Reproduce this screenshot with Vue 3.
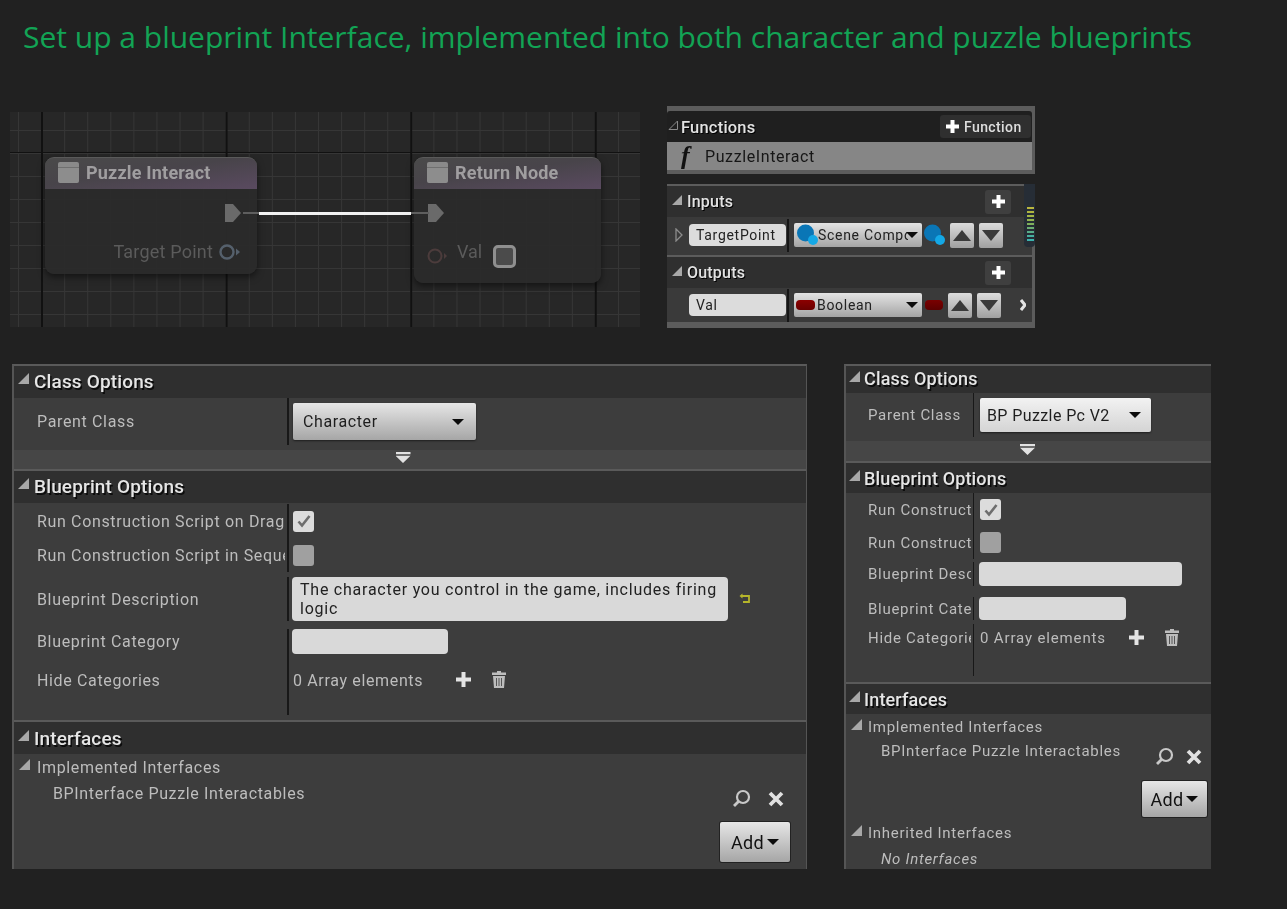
<script setup>
const meterTicks = ['#b9b63e', '#b0b63f', '#a3b646', '#93b44e', '#7fb05c', '#6cae70', '#58ad88', '#46b09f', '#3bb3ae'];
</script>

<template>
  <div class="page">
    <h1 class="title">Set up a blueprint Interface, implemented into both character and puzzle blueprints</h1>

    <div class="top-row">
      <div class="graph">
        <div class="node node-call">
          <div class="node-head"><span class="node-icon"></span>Puzzle Interact</div>
          <svg class="exec exec-out" width="20" height="20" viewBox="0 0 20 20"><path d="M1 1h8l8 9-8 9H1z" fill="#6a6a6a" /></svg>
          <span class="pin-label target-label">Target Point</span>
          <svg class="obj-pin target-pin" width="22" height="18" viewBox="0 0 22 18"><circle cx="8" cy="9" r="6.500" fill="none" stroke="#55606c" stroke-width="2.400" /><path d="M17 5.500l4 3.500-4 3.500z" fill="#55606c" /></svg>
        </div>
        <div class="node node-return">
          <div class="node-head"><span class="node-icon"></span>Return Node</div>
          <svg class="exec exec-in" width="20" height="20" viewBox="0 0 20 20"><path d="M1 1h8l8 9-8 9H1z" fill="#6a6a6a" /></svg>
          <svg class="obj-pin val-pin" width="22" height="18" viewBox="0 0 22 18"><circle cx="8" cy="9" r="6.500" fill="none" stroke="#4c3c3c" stroke-width="2" /><path d="M17 6l3 3-3 3z" fill="#4c3c3c" /></svg>
          <span class="pin-label val-label">Val</span>
          <span class="val-box"></span>
        </div>
        <span class="wire wire-dim wire-a"></span>
        <span class="wire wire-main"></span>
        <span class="wire wire-dim wire-b"></span>
      </div>

      <div class="side-col">
        <div class="fn-panel">
          <div class="fn-head">
            <svg class="tri fn-tri" width="10" height="10" viewBox="0 0 10 10"><path d="M9.500 1v8.500H1z" fill="none" stroke="#8a8a8a" /></svg>
            <span class="fn-title">Functions</span>
            <span class="fn-btn">
              <svg width="15" height="15" viewBox="0 0 15 15"><path d="M5.500 1h4v4.500H14v4H9.500V14h-4V9.500H1v-4h4.500z" fill="#fff" /></svg>
              Function
            </span>
          </div>
          <div class="fn-row"><span class="fn-f">f</span>PuzzleInteract</div>
        </div>

        <div class="io-panel">
          <div class="meter">
            <i v-for="tick in meterTicks" :key="tick" :style="{ background: tick }"></i>
          </div>
          <div class="io-head">
            <svg class="tri" width="10" height="10" viewBox="0 0 10 10"><path d="M10 0v10H0z" fill="#a8a8a8" /></svg>
            <span class="io-title">Inputs</span>
            <span class="io-add"><svg width="15" height="15" viewBox="0 0 15 15"><path d="M5.500 1h4v4.500H14v4H9.500V14h-4V9.500H1v-4h4.500z" fill="#fff" /></svg></span>
          </div>
          <div class="io-row">
            <svg class="expander" width="8" height="14" viewBox="0 0 8 14"><path d="M1 1l6 6-6 6z" fill="none" stroke="#8c8c8c" stroke-width="1.300" /></svg>
            <span class="name-box">TargetPoint</span>
            <span class="io-sep"></span>
            <span class="type-drop">
              <svg class="sphere" width="22" height="22" viewBox="0 0 22 22"><circle cx="9.500" cy="9" r="8.500" fill="#0a76b6" /><circle cx="17" cy="16" r="5" fill="#14a8e6" /></svg>
              <span class="type-text">Scene Compo</span>
              <span class="caret"></span>
            </span>
            <svg class="sphere-out" width="22" height="22" viewBox="0 0 22 22"><circle cx="9.500" cy="9" r="8.500" fill="#0a76b6" /><circle cx="17" cy="16" r="5" fill="#14a8e6" /></svg>
            <span class="arrow-btn"><span class="up"></span></span>
            <span class="arrow-btn"><span class="down"></span></span>
          </div>
          <div class="io-divider"></div>
          <div class="io-head">
            <svg class="tri" width="10" height="10" viewBox="0 0 10 10"><path d="M10 0v10H0z" fill="#a8a8a8" /></svg>
            <span class="io-title">Outputs</span>
            <span class="io-add"><svg width="15" height="15" viewBox="0 0 15 15"><path d="M5.500 1h4v4.500H14v4H9.500V14h-4V9.500H1v-4h4.500z" fill="#fff" /></svg></span>
          </div>
          <div class="io-row io-row-out">
            <span class="expander-space"></span>
            <span class="name-box">Val</span>
            <span class="io-sep"></span>
            <span class="type-drop">
              <span class="pill"></span>
              <span class="type-text">Boolean</span>
              <span class="caret"></span>
            </span>
            <span class="pill pill-out"></span>
            <span class="arrow-btn"><span class="up"></span></span>
            <span class="arrow-btn"><span class="down"></span></span>
            <svg class="chevron" width="6" height="12" viewBox="0 0 6 12"><path d="M1 1l4 5-4 5" fill="none" stroke="#e4e4e4" stroke-width="3" /></svg>
          </div>
        </div>
      </div>
    </div>

    <div class="bottom-row">
      <!-- character blueprint -->
      <section class="panel panel-large">
        <div class="sec-head sec-raised">
          <svg class="tri" width="11" height="11" viewBox="0 0 11 11"><path d="M11 0v11H0z" fill="#a8a8a8" /></svg>
          Class Options
        </div>
        <div class="prop-block class-block">
          <div class="prop prop-parent">
            <span class="prop-label">Parent Class</span>
            <span class="prop-value">
              <span class="drop"><span>Character</span><span class="caret"></span></span>
            </span>
          </div>
        </div>
        <div class="adv-bar"><span class="adv-arrow"></span></div>
        <div class="sec-head sec-divided sec-raised">
          <svg class="tri" width="11" height="11" viewBox="0 0 11 11"><path d="M11 0v11H0z" fill="#a8a8a8" /></svg>
          Blueprint Options
        </div>
        <div class="prop-block options-block">
          <div class="prop prop-check">
            <span class="prop-label">Run Construction Script on Drag</span>
            <span class="prop-value">
              <span class="check check-on"><svg width="16" height="14" viewBox="0 0 16 14"><path d="M2.500 7.500l3.500 4 7.500-9.500" fill="none" stroke="#6e6e6e" stroke-width="2.600" /></svg></span>
            </span>
          </div>
          <div class="prop prop-check">
            <span class="prop-label">Run Construction Script in Sequencer</span>
            <span class="prop-value"><span class="check"></span></span>
          </div>
          <div class="prop prop-desc">
            <span class="prop-label">Blueprint Description</span>
            <span class="prop-value">
              <span class="textbox textbox-desc">The character you control in the game, includes firing logic</span>
              <svg class="reset" width="12" height="12" viewBox="0 0 12 12"><path d="M3 3h7v6H4" fill="none" stroke="#b5b52a" stroke-width="1.800" /><path d="M0.500 3L3.500 0.500v5z" fill="#b5b52a" /></svg>
            </span>
          </div>
          <div class="prop prop-cat">
            <span class="prop-label">Blueprint Category</span>
            <span class="prop-value"><span class="textbox textbox-cat"></span></span>
          </div>
          <div class="prop prop-hide">
            <span class="prop-label">Hide Categories</span>
            <span class="prop-value">
              <span class="array-text">0 Array elements</span>
              <svg class="plus-icon" width="17" height="17" viewBox="0 0 17 17"><path d="M6.500 1h4v5.500H16v4h-5.500V16h-4v-5.500H1v-4h5.500z" fill="#e4e4e4" /></svg>
              <svg class="trash-icon" width="16" height="17" viewBox="0 0 16 17"><path d="M6 0h4v1.500h5V4H1V1.500h5zM2 5h12l-1 12H3z" fill="#bdbdbd" /><path d="M5.500 7v8M8 7v8M10.500 7v8" stroke="#555" stroke-width="1" /></svg>
            </span>
          </div>
        </div>
        <div class="sec-head sec-divided">
          <svg class="tri" width="11" height="11" viewBox="0 0 11 11"><path d="M11 0v11H0z" fill="#a8a8a8" /></svg>
          Interfaces
        </div>
        <div class="iface-block">
          <div class="iface-head">
            <svg class="tri" width="11" height="11" viewBox="0 0 11 11"><path d="M11 0v11H0z" fill="#a8a8a8" /></svg>
            Implemented Interfaces
          </div>
          <div class="iface-item">
            <span>BPInterface Puzzle Interactables</span>
            <span class="iface-tools">
              <svg width="19" height="19" viewBox="0 0 19 19"><circle cx="11" cy="8" r="6" fill="none" stroke="#c8c8c8" stroke-width="2.200" /><path d="M6.500 12.500L2 17" stroke="#c8c8c8" stroke-width="2.800" /></svg>
              <svg width="16" height="16" viewBox="0 0 16 16"><path d="M2 2l12 12M14 2L2 14" stroke="#e0e0e0" stroke-width="3.800" /></svg>
            </span>
          </div>
          <div class="add-line"><span class="add-btn">Add<span class="caret"></span></span></div>
        </div>
      </section>

      <!-- puzzle blueprint -->
      <section class="panel panel-small">
        <div class="sec-head sec-raised">
          <svg class="tri" width="11" height="11" viewBox="0 0 11 11"><path d="M11 0v11H0z" fill="#a8a8a8" /></svg>
          Class Options
        </div>
        <div class="prop-block class-block">
          <div class="prop prop-parent">
            <span class="prop-label">Parent Class</span>
            <span class="prop-value">
              <span class="drop"><span>BP Puzzle Pc V2</span><span class="caret"></span></span>
            </span>
          </div>
        </div>
        <div class="adv-bar"><span class="adv-arrow"></span></div>
        <div class="sec-head sec-divided">
          <svg class="tri" width="11" height="11" viewBox="0 0 11 11"><path d="M11 0v11H0z" fill="#a8a8a8" /></svg>
          Blueprint Options
        </div>
        <div class="prop-block options-block">
          <div class="prop prop-check">
            <span class="prop-label">Run Construction Script on Drag</span>
            <span class="prop-value">
              <span class="check check-on"><svg width="16" height="14" viewBox="0 0 16 14"><path d="M2.500 7.500l3.500 4 7.500-9.500" fill="none" stroke="#6e6e6e" stroke-width="2.600" /></svg></span>
            </span>
          </div>
          <div class="prop prop-check">
            <span class="prop-label">Run Construction Script in Sequencer</span>
            <span class="prop-value"><span class="check"></span></span>
          </div>
          <div class="prop prop-desc">
            <span class="prop-label">Blueprint Description</span>
            <span class="prop-value"><span class="textbox textbox-desc"></span></span>
          </div>
          <div class="prop prop-cat">
            <span class="prop-label">Blueprint Category</span>
            <span class="prop-value"><span class="textbox textbox-cat"></span></span>
          </div>
          <div class="prop prop-hide">
            <span class="prop-label">Hide Categories</span>
            <span class="prop-value">
              <span class="array-text">0 Array elements</span>
              <svg class="plus-icon" width="17" height="17" viewBox="0 0 17 17"><path d="M6.500 1h4v5.500H16v4h-5.500V16h-4v-5.500H1v-4h5.500z" fill="#e4e4e4" /></svg>
              <svg class="trash-icon" width="16" height="17" viewBox="0 0 16 17"><path d="M6 0h4v1.500h5V4H1V1.500h5zM2 5h12l-1 12H3z" fill="#bdbdbd" /><path d="M5.500 7v8M8 7v8M10.500 7v8" stroke="#555" stroke-width="1" /></svg>
            </span>
          </div>
        </div>
        <div class="sec-head sec-divided">
          <svg class="tri" width="11" height="11" viewBox="0 0 11 11"><path d="M11 0v11H0z" fill="#a8a8a8" /></svg>
          Interfaces
        </div>
        <div class="iface-block">
          <div class="iface-head">
            <svg class="tri" width="11" height="11" viewBox="0 0 11 11"><path d="M11 0v11H0z" fill="#a8a8a8" /></svg>
            Implemented Interfaces
          </div>
          <div class="iface-item">
            <span>BPInterface Puzzle Interactables</span>
            <span class="iface-tools">
              <svg width="19" height="19" viewBox="0 0 19 19"><circle cx="11" cy="8" r="6" fill="none" stroke="#c8c8c8" stroke-width="2.200" /><path d="M6.500 12.500L2 17" stroke="#c8c8c8" stroke-width="2.800" /></svg>
              <svg width="16" height="16" viewBox="0 0 16 16"><path d="M2 2l12 12M14 2L2 14" stroke="#e0e0e0" stroke-width="3.800" /></svg>
            </span>
          </div>
          <div class="add-line"><span class="add-btn">Add<span class="caret"></span></span></div>
          <div class="iface-head iface-inherited">
            <svg class="tri" width="11" height="11" viewBox="0 0 11 11"><path d="M11 0v11H0z" fill="#a8a8a8" /></svg>
            Inherited Interfaces
          </div>
          <div class="iface-none">No Interfaces</div>
        </div>
      </section>
    </div>
  </div>
</template>

<style>
html,
body {
  margin: 0;
  background: #212121;
}
</style>

<style scoped>
.page {
  width: 1287px;
  height: 909px;
  overflow: hidden;
  background: #212121;
  font-family: Roboto, "Liberation Sans", sans-serif;
  box-sizing: border-box;
}

.title {
  margin: 0;
  padding: 16px 0 0 23px;
  height: 106px;
  box-sizing: border-box;
  font-family: "Open Sans", "Noto Sans", sans-serif;
  font-size: 30px;
  line-height: 42px;
  font-weight: 400;
  color: #12a455;
  white-space: nowrap;
}

.top-row {
  display: flex;
  align-items: flex-start;
  gap: 27px;
  margin-left: 10px;
  height: 258px;
}

/* graph canvas */
.graph {
  position: relative;
  width: 630px;
  height: 215px;
  margin-top: 6px;
  overflow: hidden;
  filter: blur(0.6px);
  background-color: #272727;
  background-image:
    linear-gradient(90deg, #111 1.500px, transparent 1.500px),
    linear-gradient(#111 1.500px, transparent 1.500px),
    linear-gradient(90deg, #363636 1px, transparent 1px),
    linear-gradient(#363636 1px, transparent 1px);
  background-size: 184.6px 100%, 100% 184px, 23.08px 100%, 100% 23px;
  background-position: 31px 0, 0 40px, 8px 0, 0 18px;
}

.node {
  position: absolute;
  top: 45px;
  border-radius: 9px;
  background: rgba(43, 43, 43, 0.96);
  box-shadow: 0 3px 7px rgba(0, 0, 0, 0.5);
}

.node-call {
  left: 35px;
  width: 212px;
  height: 117px;
}

.node-return {
  left: 404px;
  width: 187px;
  height: 126px;
}

.node-head {
  display: flex;
  align-items: center;
  gap: 7px;
  height: 32px;
  padding: 0 0 2px 13px;
  box-sizing: border-box;
  border-radius: 9px 9px 0 0;
  border-top: 1px solid #5a5a5a;
  background: linear-gradient(172deg, #4a4a4a 0%, #48444a 45%, #5a4a60 100%);
  color: #a09ea0;
  font-size: 18px;
  font-weight: 700;
  letter-spacing: 0.2px;
}

.node-icon {
  width: 21px;
  height: 21px;
  border-radius: 2px;
  background: linear-gradient(#8a8a8a 25%, #6f6f6f 25%, #6f6f6f 30%, #8d8d8d 30%);
}

.exec,
.obj-pin,
.val-box,
.pin-label {
  position: absolute;
}

.exec-out {
  left: 179px;
  top: 46px;
}

.exec-in {
  left: 13px;
  top: 46px;
}

.pin-label {
  color: #5b5b5b;
  font-size: 18px;
  line-height: 22px;
}

.target-label {
  right: 44px;
  top: 84px;
  letter-spacing: 0.2px;
}

.target-pin {
  left: 174px;
  top: 86px;
}

.val-pin {
  left: 13px;
  top: 90px;
}

.val-label {
  left: 43px;
  top: 84px;
}

.val-box {
  left: 79px;
  top: 88px;
  width: 23px;
  height: 23px;
  box-sizing: border-box;
  border: 3px solid #8f8f8f;
  border-radius: 5px;
  background: #4b4b4b;
}

.wire {
  position: absolute;
  top: 100px;
  height: 3px;
}

.wire-main {
  left: 249px;
  width: 152px;
  background: #f1f1f1;
}

.wire-dim {
  background: #5e5e5e;
  height: 2px;
  top: 100px;
}

.wire-a {
  left: 233px;
  width: 16px;
}

.wire-b {
  left: 401px;
  width: 18px;
}

/* functions + inputs / outputs */
.side-col {
  display: flex;
  flex-direction: column;
  gap: 10px;
  width: 368px;
  filter: blur(0.3px);
}

.fn-panel {
  height: 68px;
  box-sizing: border-box;
  background: #5c5c5c;
  padding: 5px 3px 4px 0;
}

.fn-head {
  display: flex;
  align-items: center;
  height: 31px;
  background: #1f1f1f;
  border-radius: 3px 3px 0 0;
}

.fn-tri {
  margin-left: 1px;
  margin-bottom: 3px;
}

.fn-title {
  margin: 1px 0 0 3px;
  font-size: 16.500px;
  font-weight: 500;
  color: #e2e2e2;
  letter-spacing: 0.2px;
  text-shadow: 1px 1px 0 #000;
}

.fn-btn {
  display: inline-flex;
  align-items: center;
  gap: 4px;
  margin-left: auto;
  margin-right: 1px;
  width: 91px;
  height: 23px;
  padding: 0 0 0 5px;
  box-sizing: border-box;
  background: #2f2f2f;
  border-radius: 3px;
  color: #dedede;
  font-size: 14px;
  font-weight: 500;
  letter-spacing: 0.4px;
}

.fn-row {
  display: flex;
  align-items: center;
  height: 28px;
  background: #868686;
  color: #161616;
  font-size: 16px;
  letter-spacing: 0.6px;
}

.fn-f {
  width: 38px;
  padding-left: 14px;
  box-sizing: border-box;
  font-family: "Liberation Serif", serif;
  font-style: italic;
  font-weight: 700;
  font-size: 26px;
  line-height: 28px;
  color: #111;
}

.io-panel {
  position: relative;
  height: 144px;
  box-sizing: border-box;
  background: #5c5c5c;
  padding: 2px 3px 6px 0;
}

.meter {
  position: absolute;
  right: 0;
  top: 0;
  width: 11px;
  height: 63px;
  z-index: 1;
  padding: 23px 1px 0 3px;
  box-sizing: border-box;
  background: #262d36;
  border-radius: 0 0 4px 4px;
}

.meter i {
  display: block;
  height: 2px;
  margin-bottom: 2px;
}

.io-head {
  display: flex;
  align-items: center;
  height: 31px;
  background: #2f2f2f;
  padding-right: 21px;
  color: #e2e2e2;
  font-size: 16px;
  font-weight: 500;
}

.io-head .tri {
  margin: 0 5px 4px 5px;
}

.io-title {
  letter-spacing: 0.2px;
  text-shadow: 1px 1px 0 #000;
}

.io-add {
  display: inline-flex;
  align-items: center;
  justify-content: center;
  margin-left: auto;
  width: 26px;
  height: 24px;
  border-radius: 3px;
  background: #3f3f3f;
}

.io-row {
  display: flex;
  align-items: center;
  height: 36px;
  padding-left: 8px;
  box-sizing: border-box;
  background: #3a3a3a;
}

.io-row-out {
  height: 34px;
}

.io-divider {
  height: 4px;
  background: linear-gradient(#3a3a3a 50%, #5c5c5c 50%);
}

.expander,
.expander-space {
  width: 8px;
  flex: none;
}

.name-box {
  flex: none;
  width: 97px;
  height: 22px;
  margin-left: 6px;
  padding-left: 7px;
  box-sizing: border-box;
  background: #dcdcdc;
  border-radius: 4px;
  color: #222;
  font-size: 14px;
  line-height: 22px;
  letter-spacing: 0.7px;
}

.io-sep {
  flex: none;
  width: 2px;
  height: 33px;
  margin: 0 5px 0 1px;
  background: #161616;
}

.type-drop {
  flex: none;
  display: flex;
  align-items: center;
  position: relative;
  width: 128px;
  height: 24px;
  box-sizing: border-box;
  padding-left: 2px;
  border-radius: 2px;
  background: linear-gradient(#e4e4e4, #a4a4a4);
  color: #222;
  font-size: 14px;
  letter-spacing: 0.7px;
}

.type-text {
  width: 90px;
  overflow: hidden;
  white-space: nowrap;
}

.type-drop .caret {
  position: absolute;
  right: 4px;
  top: 9px;
}

.sphere {
  flex: none;
}

.sphere-out {
  flex: none;
  margin-left: 1px;
}

.pill {
  flex: none;
  display: block;
  width: 19px;
  height: 10px;
  margin-right: 2px;
  border-radius: 4px;
  background: linear-gradient(#8c0000, #6a0000);
}

.pill-out {
  margin: 0 0 0 3px;
  width: 18px;
  background: linear-gradient(#7a0000, #5c0000);
}

.arrow-btn {
  flex: none;
  display: flex;
  align-items: center;
  justify-content: center;
  width: 24px;
  height: 25px;
  margin-left: 5px;
  border-radius: 2px;
  background: linear-gradient(#dcdcdc, #a0a0a0);
}

.up {
  border-left: 9px solid transparent;
  border-right: 9px solid transparent;
  border-bottom: 11px solid #3a3a3a;
}

.down {
  border-left: 9px solid transparent;
  border-right: 9px solid transparent;
  border-top: 11px solid #3a3a3a;
}

.chevron {
  margin-left: 19px;
  flex: none;
}

/* detail panels */
.bottom-row {
  display: flex;
  align-items: flex-start;
  gap: 37px;
  margin-left: 12px;
}

.panel {
  height: 505px;
  box-sizing: border-box;
  overflow: hidden;
  background: #3d3d3d;
  border-left: 2px solid #555;
  border-top: 2px solid #5a5a5a;
  color: #bdbdbd;
  filter: blur(0.3px);
}

.panel-large {
  width: 795px;
  border-right: 1px solid #555;
  --label-w: 271px;
  --label-pad: 23px;
  font-size: 16px;
  letter-spacing: 0.65px;
}

.panel-small {
  width: 367px;
  --label-w: 125px;
  --label-pad: 22px;
  font-size: 15px;
  letter-spacing: 0.72px;
}

.sec-head {
  display: flex;
  align-items: center;
  height: 32px;
  box-sizing: border-box;
  background: #2f2f2f;
  color: #e6e6e6;
  font-size: 19px;
  font-weight: 500;
  letter-spacing: 0.15px;
  text-shadow: 1.500px 1.500px 0 #0c0c0c;
}

.sec-raised {
  padding-bottom: 2px;
}

.panel-small .sec-head {
  font-size: 18px;
  height: 30px;
  letter-spacing: 0.15px;
}

.panel-small .sec-head:first-child {
  height: 27px;
}

.sec-head .tri {
  flex: none;
  margin: 0 5px 5px 4px;
}

.panel-small .sec-head .tri {
  margin: 0 4px 5px 3px;
}

.sec-divided {
  border-top: 2px solid #5a5a5a;
  height: 34px;
}

.panel-small .sec-divided {
  height: 32px;
}

.prop-block {
  display: flex;
  flex-direction: column;
}

.class-block {
  height: 52px;
}

.panel-small .class-block {
  height: 48px;
}

.options-block {
  height: 217px;
}

.panel-small .options-block {
  height: 189px;
}

.prop {
  display: flex;
}

.prop-label {
  flex: none;
  width: var(--label-w);
  margin-right: 2px;
  padding-left: var(--label-pad);
  box-sizing: border-box;
  overflow: hidden;
  white-space: nowrap;
  align-self: center;
}

.prop-value {
  flex: 1;
  display: flex;
  align-items: center;
  padding-left: 4px;
  border-left: 2px solid #181818;
  box-sizing: border-box;
}

.panel-small .prop-value {
  padding-left: 6px;
  border-left-width: 1px;
}

.prop-parent {
  height: 47px;
}

.panel-small .prop-parent {
  height: 44px;
}

.drop {
  display: flex;
  align-items: center;
  justify-content: space-between;
  width: 183px;
  height: 37px;
  padding: 0 12px 0 10px;
  box-sizing: border-box;
  border-radius: 2px;
  background: linear-gradient(#e6e6e6, #a6a6a6);
  box-shadow: 0 1px 2px rgba(0, 0, 0, 0.5);
  color: #1e1e1e;
  font-size: 16px;
  letter-spacing: 0.6px;
}

.panel-small .drop {
  width: 171px;
  height: 34px;
  padding: 0 10px 0 7px;
  background: linear-gradient(#f2f2f2, #d4d4d4);
  letter-spacing: 0.4px;
}

.caret {
  flex: none;
  display: inline-block;
  width: 0;
  height: 0;
  border-left: 6px solid transparent;
  border-right: 6px solid transparent;
  border-top: 6px solid #0c0c0c;
}

.adv-bar {
  display: flex;
  justify-content: center;
  height: 19px;
  padding: 2px 14px 0 0;
  box-sizing: border-box;
  background: #464646;
}

.panel-small .adv-bar {
  height: 20px;
  padding: 3px 2px 0 0;
}

.adv-arrow {
  width: 15px;
  height: 11px;
  background: #e2e2e2;
  clip-path: polygon(0 0, 100% 0, 100% 20%, 0 20%, 0 34%, 100% 34%, 50% 100%, 0 34%);
}

.prop-check {
  height: 34px;
}

.prop-desc {
  height: 44px;
  margin-top: 5px;
}

.prop-cat {
  height: 25px;
  margin-top: 8px;
}

.prop-check:first-child {
  margin-top: 1px;
}

.panel-small .prop-check {
  height: 33px;
}

.panel-small .prop-check:first-child {
  margin-top: 0;
}

.panel-small .prop-desc {
  height: 24px;
  margin-top: 3px;
}

.panel-small .prop-cat {
  height: 23px;
  margin-top: 11px;
}

.prop-hide {
  height: 61px;
}

.prop-hide .prop-label {
  align-self: flex-start;
  padding-top: 17px;
}

.prop-hide .prop-value {
  align-items: flex-start;
  padding-top: 17px;
}

.panel-small .prop-hide {
  height: 52px;
  margin-top: 4px;
}

.panel-small .prop-hide .prop-label,
.panel-small .prop-hide .prop-value {
  padding-top: 5px;
}

.check {
  display: flex;
  align-items: center;
  justify-content: center;
  width: 21px;
  height: 21px;
  border-radius: 3px;
  background: #a0a0a0;
}

.check-on {
  background: #dcdcdc;
}

.textbox {
  display: block;
  box-sizing: border-box;
  background: #d9d9d9;
  border-radius: 4px;
  color: #222;
}

.textbox-desc {
  width: 436px;
  height: 44px;
  padding: 3px 8px;
  margin-left: -1px;
  font-size: 16px;
  line-height: 19px;
  letter-spacing: 0.76px;
}

.panel-small .textbox-desc {
  width: 203px;
  height: 24px;
  margin-left: -1px;
}

.textbox-cat {
  width: 156px;
  height: 25px;
  margin-left: -1px;
}

.panel-small .textbox-cat {
  width: 147px;
  height: 23px;
}

.reset {
  margin-left: 11px;
}

.array-text {
  white-space: nowrap;
}

.panel-small .array-text {
  letter-spacing: 0.85px;
}

.plus-icon {
  margin-left: 32px;
  flex: none;
}

.trash-icon {
  margin-left: 19px;
  flex: none;
}

.panel-small .plus-icon {
  margin-left: 22px;
}

.iface-block {
  display: flex;
  flex-direction: column;
}

.iface-head {
  display: flex;
  align-items: center;
  height: 26px;
}

.iface-head .tri {
  margin: 0 7px 6px 5px;
  flex: none;
}

.panel-small .iface-head .tri {
  margin-right: 6px;
}

.iface-item {
  display: flex;
  align-items: flex-start;
  justify-content: space-between;
  height: 36px;
  padding: 0 22px 0 39px;
  line-height: 28px;
}

.panel-small .iface-item {
  height: 29px;
  padding: 0 9px 0 35px;
  line-height: 22px;
}

.iface-tools {
  display: flex;
  align-items: center;
  gap: 17px;
  margin-top: 9px;
}

.panel-small .iface-tools {
  gap: 12px;
  margin-top: 7px;
}

.add-line {
  display: flex;
  justify-content: flex-end;
  padding-right: 16px;
  margin-top: 6px;
}

.panel-small .add-line {
  padding-right: 4px;
  margin-top: 12px;
}

.add-btn {
  display: flex;
  align-items: center;
  justify-content: center;
  gap: 3px;
  width: 70px;
  height: 40px;
  box-sizing: border-box;
  border-radius: 2px;
  background: linear-gradient(#e6e6e6, #a6a6a6);
  box-shadow: 0 0 0 1px #222;
  color: #111;
  font-size: 18px;
  letter-spacing: 0.3px;
}

.panel-small .add-btn {
  width: 65px;
  height: 36px;
}

.iface-inherited {
  margin-top: 3px;
}

.iface-none {
  padding-left: 35px;
  height: 26px;
  line-height: 26px;
  font-style: italic;
}
</style>
